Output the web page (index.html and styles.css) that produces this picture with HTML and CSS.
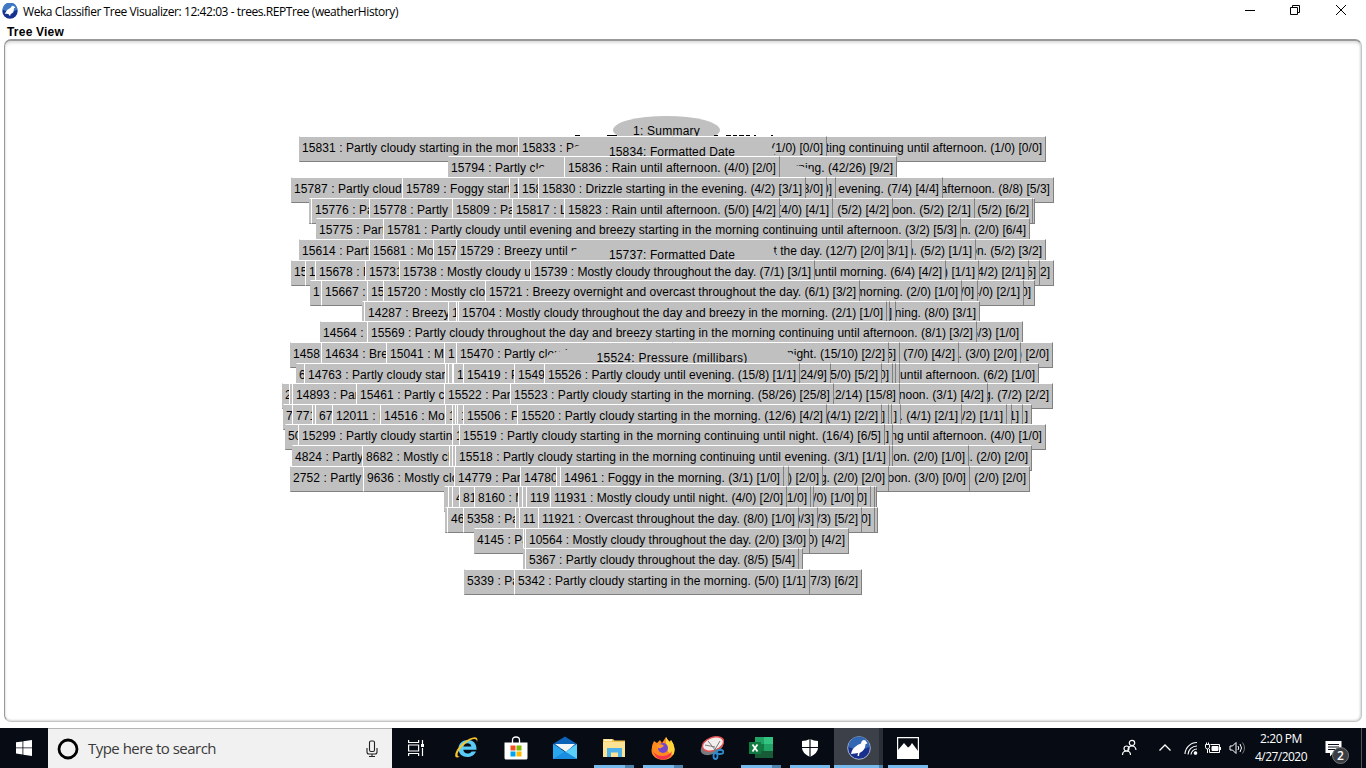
FILE: index.html
```html
<!DOCTYPE html>
<html lang="en">
<head>
<meta charset="utf-8">
<title>Weka Classifier Tree Visualizer</title>
<link rel="stylesheet" href="styles.css">
</head>
<body>
<div class="screen">
  <header class="titlebar">
    <svg class="app-icon" viewBox="0 0 24 24"><circle cx="12" cy="12" r="11.5" fill="#16318f"/><path d="M1 10a11 11 0 0 1 22 0Q12 16 1 10z" fill="#3f78c4"/><path d="M4 16l4-6 5-3 2-3 3 1 2 2-2 1-1 6-4 3-1 3-2-3-3-1z" fill="#fff"/></svg>
    <span class="title" data-fit="375">Weka Classifier Tree Visualizer: 12:42:03 - trees.REPTree (weatherHistory)</span>
    <div class="window-buttons">
      <svg viewBox="0 0 12 12"><path d="M2 6.500h10" /></svg>
      <svg viewBox="0 0 12 12"><path d="M1.500 3.500h7v7h-7zM3.500 3.500v-2h7v7h-2"/></svg>
      <svg viewBox="0 0 12 12"><path d="M1 1l10 10M11 1L1 11"/></svg>
    </div>
  </header>
  <div class="panel-title"><span data-fit="57">Tree View</span></div>
  <main class="canvas" id="canvas"></main>
  <footer class="taskbar">
    <div class="start"><svg viewBox="0 0 16 16" width="16" height="16"><path fill="#fff" d="M0 2.300l6.500-.9v6.100H0zM7.300 1.300L16 0v7.500H7.300zM0 8.300h6.500v6.200L0 13.600zM7.300 8.300H16V16l-8.700-1.300z"/></svg></div>
    <div class="search">
      <svg class="cortana" viewBox="0 0 22 22"><circle cx="11" cy="11" r="9" fill="none" stroke="#000" stroke-width="2.800"/></svg>
      <span class="search-text" data-fit="128">Type here to search</span>
      <svg class="mic" viewBox="0 0 12 18" fill="none" stroke="#222" stroke-width="1.100"><rect x="3.500" y="1" width="5" height="10.500" rx="1.500"/><path d="M1 8v4q0 2 2 2h6q2 0 2-2V8M6 14v2.500M3 16.500h6"/></svg>
    </div>
    <div class="taskview"><svg viewBox="0 0 17 16" width="17" height="16" fill="none" stroke="#fff" stroke-width="1.200"><path d="M.6 0v2.500h10V0M.6 16v-2.500h10V16M.6 5h10v6H.6zM14.500 0v4M14.500 8v8"/><path fill="#fff" stroke="none" d="M13 4h3v3h-3z"/></svg></div>
    <nav class="apps">
      <div class="app"><svg viewBox="0 0 24 24"><path d="M21.500 13.800H8.300c.2 4.300 6.400 4.700 8.300 1.600h4.400C17.500 24 3.500 22.500 3.500 12.800 3.500 1.500 22.300.5 21.500 13.800zM8.400 10.600h8c-.2-4.400-7.500-4.600-8 0z" fill="#5acbf5"/><path d="M5 20.500C-2.500 24.500-1 14.500 8 7 16 .2 24.500-1 22 6c0-5-6-3-12 2C3 14 0 21 5 20.500z" fill="#f7c52b"/></svg></div>
      <div class="app"><svg viewBox="0 0 24 24"><path d="M8.500 7V4q0-3 3.500-3t3.500 3v3" fill="none" stroke="#fff" stroke-width="1.300"/><path d="M.5 6.500h23V22q0 1.500-1.500 1.500H2Q.5 23.500.5 22z" fill="#fff"/><path d="M6.500 9.500h5v5h-5z" fill="#f25022"/><path d="M12.500 9.500h5v5h-5z" fill="#7fba00"/><path d="M6.500 15.500h5v5h-5z" fill="#00a4ef"/><path d="M12.500 15.500h5v5h-5z" fill="#ffb900"/></svg></div>
      <div class="app"><svg viewBox="0 0 24 24"><path d="M0 8l12-7.500L24 8v5H0z" fill="#0c62b6"/><path d="M2 8h20l-9 8z" fill="#f4f5f6"/><path d="M0 8l13 8.500L24 23H0z" fill="#29a6ee"/><path d="M24 8v15L12 16z" fill="#59cffa"/><path d="M0 23l12-7.500L24 23z" fill="#1b8de0"/></svg></div>
      <div class="app running more"><svg viewBox="0 0 24 24"><path d="M1 3h10l1.500 1.500H23V20H1z" fill="#f2c14e"/><path d="M1 6h22v15H1z" fill="#fde293"/><path d="M2 3.300h8v2H2z" fill="#fff3c9"/><path d="M5 12h15v9h-4v-4.500H9V21H5z" fill="#4db1ea"/></svg></div>
      <div class="app running more"><svg viewBox="0 0 24 24"><path d="M3 5l3 2 3-3 2 3 4-6q2 4 4 5l1-2q4 5 3.500 10c-.5 14-23 12-23 .5Q.5 9 3 5z" fill="#ff8a1f"/><path d="M15 1q2 4 4 5l1-2q6 9 2 15-8-2-7-18z" fill="#ffd43a"/><path d="M1 12q2 8 10 8 7 0 10-5-1 8-9 8.500T1 12z" fill="#f8344c"/><circle cx="12" cy="12" r="5" fill="#7546ce"/><path d="M6 9q5-2 7 1l-3 2q-4 1-4-3z" fill="#ff9a26"/></svg></div>
      <div class="app"><svg viewBox="0 0 24 24"><ellipse cx="12" cy="11" rx="12" ry="7" transform="rotate(-25 12 11)" fill="#777b80"/><ellipse cx="13" cy="8" rx="11" ry="6.500" transform="rotate(-20 13 8)" fill="#f3eeee" stroke="#e25252" stroke-width="1.500"/><path d="M8 5l8 10M20 5l-6 10M5 9l10 2" stroke="#777" stroke-width="1"/><g fill="none" stroke="#2d8cd0" stroke-width="1.800"><ellipse cx="20" cy="16" rx="3.500" ry="2"/><ellipse cx="15.500" cy="20" rx="2" ry="3"/></g></svg></div>
      <div class="app running more"><svg viewBox="0 0 24 24"><path d="M6 1h18v21H6z" fill="#185c37"/><path d="M6 1h9v7H6z" fill="#21a366"/><path d="M15 1h9v7h-9z" fill="#33c481"/><path d="M6 8h9v7H6z" fill="#107c41"/><path d="M15 8h9v7h-9z" fill="#21a366"/><path d="M0 6h12v12H0z" fill="#107c41"/><path d="M3.500 8.500l5 7M8.500 8.500l-5 7" stroke="#fff" stroke-width="1.800"/></svg></div>
      <div class="app running"><svg viewBox="0 0 24 24"><path d="M12 3q4 2 8 2v7q0 5-8 9-8-4-8-9V5q4 0 8-2z" fill="#fff"/><path d="M12 2v20M3 11.500h18" stroke="#080d15" stroke-width="1.200"/></svg></div>
      <div class="app running active"><svg viewBox="0 0 24 24"><circle cx="12" cy="12" r="11.300" fill="#182f8d" stroke="#a9b7cd"/><path d="M1.500 11a10.500 10.500 0 0 1 21 0Q12 16 1.500 11z" fill="#3267b4"/><path d="M4 18q1-5 4-7 3-3 6-3.500Q14.500 4 17 4q2 0 2.500 2l1 1.500-2 .5q0 5-3.500 7.500l-2.500 1.500-.5 3h-1.500l.5-3-3 .5z" fill="#fff"/></svg></div>
      <div class="app running"><svg viewBox="0 0 24 24"><path d="M1.600 1.600h20.800v20.800H1.600z" fill="#080d15" stroke="#fff" stroke-width="1.200"/><path d="M2 14l6-7 4 4.500 2-1.500 2-3 6 8v7.500H2z" fill="#fff"/></svg></div>
    </nav>
    <div class="tray">
      <svg class="people" viewBox="0 0 16 18" fill="none" stroke="#fff" stroke-width="1.200"><circle cx="11" cy="4" r="2.700"/><path d="M7 11q0-4 4-4 3.500 0 4 4"/><circle cx="5.500" cy="9.500" r="2.500"/><path d="M1.500 16q0-4 4-4t4 4"/></svg>
      <svg class="chevron" viewBox="0 0 14 10" fill="none" stroke="#fff" stroke-width="1.300"><path d="M1.500 7.500L7 2l5.500 5.500"/></svg>
      <svg class="wifi" viewBox="0 0 14 14" fill="none" stroke="#fff" stroke-width="1.100"><path d="M1 13A12 12 0 0 1 13 1.500M4 13.500A9 9 0 0 1 13 5M7 13.500A6 6 0 0 1 13 8"/><circle cx="11.500" cy="12" r="1.300" fill="#fff"/></svg>
      <svg class="battery" viewBox="0 0 17 12" fill="none" stroke="#fff"><path d="M5.500 2.500h9v8h-10V7M15.500 5v3M.5 2.500h4V5q0 2-2 2T.5 5zM1.500.5v2M3.500.5v2M2.500 7v4"/><path fill="#fff" d="M7 4.500h6v4H7z"/></svg>
      <svg class="volume" viewBox="0 0 17 14" fill="none" stroke="#fff"><path d="M1 5h2.500L7 1.500v11L3.500 9H1zM9 5q1.500 2 0 4M11 3q3 4 0 8"/><path d="M13.500 1.500q4 5.500 0 11" stroke="#777"/></svg>
      <div class="clock"><span data-fit="42">2:20 PM</span><span data-fit="52">4/27/2020</span></div>
      <div class="notice">
        <svg viewBox="0 0 17 17" width="17" height="17"><path d="M.5 1h16v12H8l-3 3.500V13H.5z" fill="#fff"/><path d="M3 4.500h11M3 7h11M3 9.500h7" stroke="#080d15"/></svg>
        <span class="badge">2</span>
      </div>
    </div>
  </footer>
</div>
<script src="tree.js"></script>
</body>
</html>
```
FILE: styles.css
```css
* { box-sizing: border-box; }
body { margin: 0; background: #fff; overflow: hidden; }
.screen { width: 1366px; height: 768px; display: flex; flex-direction: column; background: #fff; }
[data-fit] { white-space: pre; }

.titlebar { height: 24px; display: flex; align-items: center; padding-left: 2px; font: 12px/24px "Open Sans", "Noto Sans", sans-serif; color: #000; }
.app-icon { width: 16px; height: 16px; margin: 0 5px 2px 0; }
.title { height: 24px; }
.window-buttons { margin-left: auto; display: flex; gap: 34px; padding: 0 19px 4px 0; }
.window-buttons svg { width: 12px; height: 12px; fill: none; stroke: #000; stroke-width: 1; }
.panel-title { height: 15px; padding-left: 7px; font: bold 12px/16px "Liberation Sans", Arial, sans-serif; color: #000; }

.canvas { position: relative; height: 683px; margin: 0 4px 6px; border: 1px solid #c4c4c4; border-top: 2px solid #999; border-left-color: #999; border-radius: 7px; box-shadow: inset 0 2px 3px #ddd, inset -1px 0 2px #ddd, inset 0 -1px 2px #ddd; overflow: hidden; }
.node { position: absolute; height: 26px; background: #c0c0c0; border: 1px solid; border-color: #fff transparent #808080 transparent; overflow: hidden; white-space: pre; font: 12px/22px "Liberation Sans", Arial, sans-serif; color: #000; letter-spacing: .08px; }
.node.left { border-left: 1px solid #fff; padding-left: 3px; }
.node.outer { border-left-color: #c0c0c0; padding-left: 2px; }
.node.right { border-right: 1px solid #808080; display: flex; justify-content: flex-end; padding-right: 3px; letter-spacing: .03px; }
.node.full { border-left: 1px solid #fff; border-right: 1px solid #808080; padding-left: 3px; }
.oval { position: absolute; height: 30px; border-radius: 50%; background: #c0c0c0; text-align: center; white-space: pre; font: 12px/31px "Liberation Sans", Arial, sans-serif; color: #000; }
.root { height: 28px; line-height: 30px; }
.edge-mark { position: absolute; height: 1px; background: #000; }

.taskbar { height: 40px; display: flex; background: #060b14; color: #fff; font-family: "Open Sans", "Noto Sans", sans-serif; }
.start { width: 48px; display: flex; align-items: center; justify-content: center; }
.search { width: 344px; background: #f1f1f1; border-top: 1px solid #b5b5b5; display: flex; align-items: center; padding: 0 14px 0 9px; }
.cortana { width: 22px; height: 22px; }
.search-text { margin: -2px 0 0 9px; font-size: 15px; color: #3a3a3a; }
.mic { width: 12px; height: 18px; margin-left: auto; }
.taskview { width: 50px; padding-right: 2px; display: flex; align-items: center; justify-content: center; }
.apps { display: flex; }
.app { width: 49px; height: 40px; display: flex; flex-direction: column; align-items: center; padding-top: 8px; }
.app svg { width: 24px; height: 24px; flex: none; }
.app::after { content: ""; width: 40px; height: 3px; margin-top: 5px; }
.running::after { background: #76b9ed; }
.more::after { background: linear-gradient(90deg, #76b9ed 31px, #4f83ad 31px); }
.active { background: linear-gradient(90deg, #3b4049 45px, #292e37 45px); }
.active::after { width: 49px; background: linear-gradient(90deg, #76b9ed 45px, #4f83ad 45px); }
.tray { margin-left: auto; display: flex; align-items: center; width: 245px; }
.tray > * { flex: none; }
.people { width: 16px; height: 18px; }
.chevron { width: 14px; height: 10px; margin-left: 21px; }
.wifi { width: 14px; height: 14px; margin-left: 12px; }
.battery { width: 17px; height: 12px; margin-left: 7px; }
.volume { width: 17px; height: 14px; margin-left: 7px; }
.clock { width: 60px; margin-left: 5px; display: flex; flex-direction: column; align-items: center; font-size: 12px; line-height: 18px; }
.notice { position: relative; width: 51px; height: 40px; padding: 12px 0 0 14px; border-right: 1px solid #555; }
.badge { position: absolute; left: 21px; top: 19px; width: 17px; height: 17px; border-radius: 50%; background: #3a3d42; border: 1px solid #777; font-size: 12px; font-weight: 600; line-height: 15px; text-align: center; }
```
FILE: tree.js
```js
// Each level: top, left-hand boxes [x, text], front box [x, right, text], right-hand boxes [right, text], oval [x, right, text].
const levels = [
  { top: 136, left: [[299, "15831 : Partly cloudy starting in the morning"], [518, "15833 : Pa"]],
    right: [[1045, "starting continuing until afternoon. (1/0) [0/0]"], [826, "(1/0) [0/0]"]], oval: [568, 775, "15834: Formatted Date", 126] },
  { top: 156, left: [[448, "15794 : Partly clo"]], full: [564, 779, "15836 : Rain until afternoon. (4/0) [2/0]"], right: [[896, "morning. (42/26) [9/2]"]], oval: [534, 811, "", 0] },
  { top: 177, left: [[291, "15787 : Partly cloudy"], [402, "15789 : Foggy starting"], [509, "1"], [518, "158"]], full: [538, 805, "15830 : Drizzle starting in the evening. (4/2) [3/1]"],
    right: [[1053, "afternoon. (8/8) [5/3]"], [942, "evening. (7/4) [4/4]"], [835, "0]"], [826, "[3/0]"]] },
  { top: 198, left: [[309, ""], [311, "15776 : Par"], [369, "15778 : Partly cl"], [452, "15809 : Par"], [512, "15817 : Li"]], full: [564, 779, "15823 : Rain until afternoon. (5/0) [4/2]"],
    right: [[1034, ""], [1032, "(5/2) [6/2]"], [974, "afternoon. (5/2) [2/1]"], [892, ". (5/2) [4/2]"], [832, "(4/0) [4/1]"]] },
  { top: 218, left: [[316, "15775 : Part"]], full: [383, 960, "15781 : Partly cloudy until evening and breezy starting in the morning continuing until afternoon. (3/2) [5/3]"], right: [[1029, "n. (2/0) [6/4]"]] },
  { top: 239, left: [[299, "15614 : Partly"], [369, "15681 : Mos"], [433, "1572"], [456, "15729 : Breezy until n"]],
    right: [[1045, "noon. (5/2) [3/2]"], [975, "n. (5/2) [1/1]"], [911, "[3/1]"], [887, "t the day. (12/7) [2/0]"]], oval: [568, 775, "15737: Formatted Date", 126] },
  { top: 260, left: [[291, "156"], [305, "1"], [315, "15678 : M"], [365, "15731"], [399, "15738 : Mostly cloudy un"]], full: [530, 814, "15739 : Mostly cloudy throughout the day. (7/1) [3/1]"],
    right: [[1053, "2]"], [1039, "5]"], [1028, "(4/2) [2/1]"], [978, ") [1/1]"], [945, "until morning. (6/4) [4/2]"]] },
  { top: 280, left: [[310, "1"], [321, "15667 : M"], [367, "156"], [383, "15720 : Mostly clou"]], full: [485, 859, "15721 : Breezy overnight and overcast throughout the day. (6/1) [3/2]"],
    right: [[1034, "0]"], [1023, "(4/0) [2/1]"], [977, "/0]"], [961, "morning. (2/0) [1/0]"]] },
  { top: 301, left: [[362, ""], [364, "14287 : Breezy"], [448, "1"], [456, ""]], full: [458, 886, "15704 : Mostly cloudy throughout the day and breezy in the morning. (2/1) [1/0]"],
    right: [[979, "morning. (8/0) [3/1]"], [895, "]"], [889, ""]] },
  { top: 321, left: [[320, "14564 : M"]], full: [367, 976, "15569 : Partly cloudy throughout the day and breezy starting in the morning continuing until afternoon. (8/1) [3/2]"], right: [[1022, "(6/3) [1/0]"]] },
  { top: 342, left: [[290, "1458"], [321, "14634 : Bree"], [386, "15041 : Mo"], [444, "1"], [456, "15470 : Partly cloud"]],
    right: [[1052, ") [2/0]"], [1020, ". (3/0) [2/0]"], [958, "(7/0) [4/2]"], [899, "5]"], [888, "night. (15/10) [2/2]"]], oval: [546, 797, "15524: Pressure (millibars)", 151] },
  { top: 363, left: [[296, "6"], [304, "14763 : Partly cloudy start"], [445, ""], [448, ""], [452, ""], [453, "1"], [463, "15419 : P"], [514, "15495"]], full: [544, 799, "15526 : Partly cloudy until evening. (15/8) [1/1]"],
    right: [[1038, "until afternoon. (6/2) [1/0]"], [899, ""], [895, ""], [892, "0]"], [881, "(5/0) [5/2]"], [830, "[24/9]"]] },
  { top: 383, left: [[282, "2"], [289, ""], [292, "14893 : Par"], [356, "15461 : Partly cl"], [444, "15522 : Part"]], full: [510, 833, "15523 : Partly cloudy starting in the morning. (58/26) [25/8]"],
    right: [[1052, "morning. (7/2) [2/2]"], [987, "afternoon. (3/1) [4/2]"], [899, "(12/14) [15/8]"]] },
  { top: 404, left: [[283, "7"], [292, "7717"], [312, ""], [315, "671"], [332, "12011 : M"], [380, "14516 : Mos"], [445, "1"], [452, ""], [455, ""], [457, "1"], [463, "15506 : Pa"]], full: [517, 826, "15520 : Partly cloudy starting in the morning. (12/6) [4/2]"],
    right: [[1031, "]"], [1022, "1]"], [1011, ""], [1006, "(1/2) [1/1]"], [961, ". (4/1) [2/1]"], [900, "]"], [891, ""], [888, "]"], [881, "(4/1) [2/2]"]] },
  { top: 424, left: [[285, "502"], [298, "15299 : Partly cloudy starting"], [452, "1"]], full: [459, 884, "15519 : Partly cloudy starting in the morning continuing until night. (16/4) [6/5]"],
    right: [[1045, "morning until afternoon. (4/0) [1/0]"], [892, "]"]] },
  { top: 445, left: [[292, "4824 : Partly"], [362, "8682 : Mostly clo"], [449, ""], [452, ""]], full: [455, 889, "15518 : Partly cloudy starting in the morning continuing until evening. (3/1) [1/1]"],
    right: [[1031, "n. (2/0) [2/0]"], [968, "on. (2/0) [1/0]"], [892, ""]] },
  { top: 466, left: [[290, "2752 : Partly"], [363, "9636 : Mostly clou"], [454, "14779 : Part"], [520, "14780"], [556, ""]], full: [560, 783, "14961 : Foggy in the morning. (3/1) [1/0]"],
    right: [[1029, ". (2/0) [2/0]"], [969, "afternoon. (3/0) [0/0]"], [888, "morning. (2/0) [2/0]"], [822, "(2/0) [2/0]"], [788, ""]] },
  { top: 486, left: [[444, ""], [448, ""], [452, "4"], [459, "816"], [474, "8160 : M"], [518, ""], [522, ""], [526, "1193"]], full: [550, 786, "11931 : Mostly cloudy until night. (4/0) [2/0]"],
    right: [[876, ""], [874, ""], [870, "0]"], [857, "(2/0) [1/0]"], [813, ""], [810, "[1/0]"]] },
  { top: 507, left: [[445, ""], [447, "468"], [463, "5358 : Par"], [515, ""], [519, "11"]], full: [538, 798, "11921 : Overcast throughout the day. (8/0) [1/0]"],
    right: [[877, ""], [874, "0]"], [861, "(2/3) [5/2]"], [817, "[0/3]"]] },
  { top: 528, left: [[474, "4145 : Pa"], [523, ""]], full: [525, 809, "10564 : Mostly cloudy throughout the day. (2/0) [3/0]"], right: [[848, "(2/0) [4/2]"]] },
  { top: 548, left: [[523, ""]], full: [525, 798, "5367 : Partly cloudy throughout the day. (8/5) [5/4]"], right: [[802, ""]] },
  { top: 569, left: [[464, "5339 : Par"]], full: [514, 809, "5342 : Partly cloudy starting in the morning. (5/0) [1/1]"], right: [[861, "(7/3) [6/2]"]] }
];

const canvas = document.getElementById("canvas");
const originX = 5, originY = 41, middle = 672;

function fit(span, width) {
  span.style.letterSpacing = "0px";
  const natural = span.getBoundingClientRect().width;
  span.style.letterSpacing = (width - natural) / span.textContent.length + "px";
}

function box(kind, x, end, top, text, textWidth) {
  const el = document.createElement("div");
  el.className = kind;
  el.style.left = x - originX + "px";
  el.style.top = top - originY + "px";
  el.style.width = end - x + 1 + "px";
  if (text) {
    const span = document.createElement("span");
    span.textContent = text;
    el.append(span);
    canvas.append(el);
    if (textWidth) fit(span, textWidth);
  } else {
    canvas.append(el);
  }
}

box("oval root", 613, 719, 116, "1: Summary", 67);
[[575, 5], [607, 10], [714, 4], [726, 5], [733, 4], [739, 5], [746, 4], [754, 2], [771, 2]].forEach(([x, width]) => box("edge-mark", x, x + width - 1, 135, "", 0));

for (const level of levels) {
  level.left.forEach(([x, text], i) => box(i === 0 ? "node left outer" : "node left", x, middle, level.top, text, 0));
  for (const [right, text] of level.right) box("node right", middle, right, level.top, text, 0);
  if (level.oval) box("oval", level.oval[0], level.oval[1], level.top + 1, level.oval[2], level.oval[3]);
  if (level.full) box("node full", level.full[0], level.full[1], level.top, level.full[2], level.full[1] - level.full[0] - 7);
}
document.querySelectorAll("[data-fit]").forEach(span => fit(span, Number(span.dataset.fit)));
```
